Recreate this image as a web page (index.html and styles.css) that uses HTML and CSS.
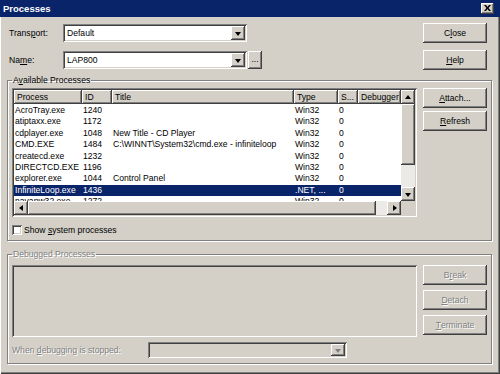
FILE: index.html
```html
<!doctype html>
<html lang="en">
<head>
	<meta charset="UTF-8">
	<title>Processes</title>
	<link rel="stylesheet" href="styles.css">
</head>
<body>
<div class="window">
	<div class="titlebar">
		<span class="title">Processes</span>
		<span class="xbtn">
			<svg width="7" height="6" viewBox="0 0 7 6"><path d="M0 0h2l1.5 2 1.5-2h2l-2.5 3 2.5 3h-2l-1.5-2-1.5 2h-2l2.5-3z" fill="#000"/></svg>
		</span>
	</div>
	<div class="body">
		<div class="top">
			<div class="fields">
				<div class="field">
					<span class="label">Trans<u>p</u>ort:</span>
					<div class="combo">
						<span class="value">Default</span>
						<span class="drop"><i class="tri down"></i></span>
					</div>
				</div>
				<div class="field">
					<span class="label">Na<u>m</u>e:</span>
					<div class="combo">
						<span class="value">LAP800</span>
						<span class="drop"><i class="tri down"></i></span>
					</div>
					<span class="dots">...</span>
				</div>
			</div>
			<div class="btns">
				<span class="btn">C<u>l</u>ose</span>
				<span class="btn"><u>H</u>elp</span>
			</div>
		</div>

		<fieldset class="group">
			<legend>A<u>v</u>ailable Processes</legend>
			<div class="group-main">
				<div class="listview">
					<div class="table">
						<div class="row head">
							<span>Process</span><span>ID</span><span>Title</span><span>Type</span><span>S...</span><span>Debugger</span>
						</div>
						<div class="rows">
							<div class="row"><span>AcroTray.exe</span><span>1240</span><span></span><span>Win32</span><span>0</span><span></span></div>
							<div class="row"><span>atiptaxx.exe</span><span>1172</span><span></span><span>Win32</span><span>0</span><span></span></div>
							<div class="row"><span>cdplayer.exe</span><span>1048</span><span>New Title - CD Player</span><span>Win32</span><span>0</span><span></span></div>
							<div class="row"><span>CMD.EXE</span><span>1484</span><span>C:\WINNT\System32\cmd.exe - infiniteloop</span><span>Win32</span><span>0</span><span></span></div>
							<div class="row"><span>createcd.exe</span><span>1232</span><span></span><span>Win32</span><span>0</span><span></span></div>
							<div class="row"><span>DIRECTCD.EXE</span><span>1196</span><span></span><span>Win32</span><span>0</span><span></span></div>
							<div class="row"><span>explorer.exe</span><span>1044</span><span>Control Panel</span><span>Win32</span><span>0</span><span></span></div>
							<div class="row sel"><span>InfiniteLoop.exe</span><span>1436</span><span></span><span>.NET, ...</span><span>0</span><span></span></div>
							<div class="row"><span>navapw32.exe</span><span>1272</span><span></span><span>Win32</span><span>0</span><span></span></div>
						</div>
					</div>
					<div class="vscroll">
						<span class="sbtn"><i class="tri up"></i></span>
						<span class="thumb vthumb"></span>
						<span class="track"></span>
						<span class="sbtn"><i class="tri down"></i></span>
					</div>
					<div class="hscroll">
						<span class="sbtn"><i class="tri left"></i></span>
						<span class="thumb hthumb"></span>
						<span class="track"></span>
						<span class="sbtn"><i class="tri right"></i></span>
					</div>
					<div class="corner"></div>
				</div>
				<div class="btns side">
					<span class="btn"><u>A</u>ttach...</span>
					<span class="btn"><u>R</u>efresh</span>
				</div>
			</div>
			<div class="check"><span class="box"></span><span>Show <u>s</u>ystem processes</span></div>
		</fieldset>

		<fieldset class="group off">
			<legend>Debugged Processes</legend>
			<div class="group-main">
				<div class="debuglist"></div>
				<div class="btns side spaced">
					<span class="btn">B<u>r</u>eak</span>
					<span class="btn"><u>D</u>etach</span>
					<span class="btn"><u>T</u>erminate</span>
				</div>
			</div>
			<div class="stop-row">
				<span class="stop-label">When <u>d</u>ebugging is stopped:</span>
				<div class="combo small">
					<span class="value"></span>
					<span class="drop"><i class="tri down grey"></i></span>
				</div>
			</div>
		</fieldset>
	</div>
</div>
</body>
</html>
```

FILE: styles.css
```css
*
{
	box-sizing: border-box;
}

body
{
	margin: 0;
	font-family: "Liberation Sans", Arial, sans-serif;
	font-size: 8.6px;
	color: #000000;
}

u
{
	text-decoration: underline;
	text-underline-offset: 1px;
}

.window
{
	width: 500px;
	height: 374px;
	background-color: #d4d0c8;
	box-shadow: inset 1px 0 #ffffff, inset -1px -1px #404040, inset -2px -2px #808080;
	overflow: hidden;
}

.titlebar
{
	height: 17px;
	background-color: #0a246a;
	display: flex;
	align-items: center;
	justify-content: space-between;
	padding: 0 6px 0 3px;
}

.title
{
	color: #ffffff;
	font-weight: bold;
	font-size: 9.5px;
}

.xbtn
{
	width: 13px;
	height: 11px;
	background-color: #d4d0c8;
	box-shadow: inset -1px -1px #404040, inset 1px 1px #ffffff, inset -2px -2px #808080;
	display: flex;
	align-items: center;
	justify-content: center;
	padding-bottom: 1px;
}

.body
{
	padding: 6px 8px 0 7px;
}

.top
{
	display: flex;
	justify-content: space-between;
	padding: 0 5px 0 2px;
}

.fields
{
	display: flex;
	flex-direction: column;
	gap: 9px;
	padding-top: 1px;
}

.field
{
	display: flex;
	align-items: center;
	height: 18px;
}

.label
{
	width: 54px;
}

.combo
{
	width: 184px;
	height: 18px;
	background-color: #ffffff;
	box-shadow: inset 1px 1px #808080, inset -1px -1px #ffffff, inset 2px 2px #404040, inset -2px -2px #d4d0c8;
	display: flex;
	align-items: center;
	justify-content: space-between;
	padding: 2px;
}

.combo .value
{
	padding-left: 2px;
}

.drop
{
	width: 14px;
	height: 14px;
	background-color: #d4d0c8;
	box-shadow: inset -1px -1px #404040, inset 1px 1px #ffffff, inset -2px -2px #808080;
	display: flex;
	align-items: center;
	justify-content: center;
}

.tri
{
	width: 0;
	height: 0;
	border: 3.5px solid transparent;
}

.tri.down
{
	border-top: 4px solid #000000;
	border-bottom-width: 0;
	margin-top: 1px;
}

.tri.up
{
	border-bottom: 4px solid #000000;
	border-top-width: 0;
	margin-bottom: 1px;
}

.tri.left
{
	border-right: 4px solid #000000;
	border-left-width: 0;
	margin-right: 1px;
}

.tri.right
{
	border-left: 4px solid #000000;
	border-right-width: 0;
	margin-left: 1px;
}

.tri.grey
{
	border-top-color: #808080;
}

.dots
{
	width: 14px;
	height: 18px;
	margin-left: 1px;
	background-color: #d4d0c8;
	box-shadow: inset -1px -1px #404040, inset 1px 1px #ffffff, inset -2px -2px #808080;
	display: flex;
	align-items: center;
	justify-content: center;
	padding-bottom: 2px;
}

.btns
{
	display: flex;
	flex-direction: column;
	gap: 7px;
}

.btns.side
{
	gap: 3px;
}

.btns.spaced
{
	gap: 5px;
}

.btn
{
	width: 64px;
	height: 20px;
	background-color: #d4d0c8;
	box-shadow: inset -1px -1px #404040, inset 1px 1px #ffffff, inset -2px -2px #808080;
	display: flex;
	align-items: center;
	justify-content: center;
}

.group
{
	margin: 5px 0 0 0;
	padding: 2px 4px 4px 4px;
	border: 1px solid #808080;
	box-shadow: 1px 1px #ffffff, inset 1px 1px #ffffff;
	min-width: 0;
}

.group legend
{
	padding: 0 1px;
	margin-left: 0;
	line-height: 11px;
}

.group-main
{
	display: flex;
	justify-content: space-between;
	align-items: flex-start;
}

.listview
{
	width: 405px;
	height: 129px;
	padding: 2px;
	background-color: #ffffff;
	box-shadow: inset 1px 1px #808080, inset -1px -1px #ffffff, inset 2px 2px #404040, inset -2px -2px #d4d0c8;
	display: grid;
	grid-template-columns: 387px 14px;
	grid-template-rows: 111px 14px;
}

.table
{
	overflow: hidden;
}

.row
{
	display: grid;
	grid-template-columns: 68px 30px 182px 44px 20px 43px;
	height: 11.4px;
	line-height: 11.4px;
	white-space: nowrap;
}

.row span
{
	padding-left: 1px;
	overflow: hidden;
}

.row.head
{
	height: 14px;
	line-height: 14px;
}

.row.head span
{
	background-color: #d4d0c8;
	box-shadow: inset -1px -1px #404040, inset 1px 1px #ffffff, inset -2px -2px #808080;
	padding-left: 3px;
}

.rows
{
	padding-top: 1px;
}

.row.sel
{
	background-color: #0a246a;
	color: #ffffff;
}

.vscroll
{
	display: flex;
	flex-direction: column;
}

.hscroll
{
	display: flex;
}

.sbtn
{
	width: 14px;
	height: 14px;
	flex: none;
	background-color: #d4d0c8;
	box-shadow: inset -1px -1px #404040, inset 1px 1px #ffffff, inset -2px -2px #808080;
	display: flex;
	align-items: center;
	justify-content: center;
}

.thumb
{
	background-color: #d4d0c8;
	box-shadow: inset -1px -1px #404040, inset 1px 1px #ffffff, inset -2px -2px #808080;
	flex: none;
}

.vthumb
{
	height: 61px;
}

.hthumb
{
	width: 348px;
}

.track
{
	flex: 1;
	background-color: #eceae6;
}

.corner
{
	background-color: #d4d0c8;
}

.check
{
	display: flex;
	align-items: center;
	height: 12px;
	margin-top: 7px;
}

.box
{
	width: 10px;
	height: 10px;
	margin-right: 2px;
	background-color: #ffffff;
	box-shadow: inset 1px 1px #808080, inset -1px -1px #ffffff, inset 2px 2px #404040, inset -2px -2px #d4d0c8;
}

.group.off
{
	margin-top: 8px;
	padding-top: 5px;
	padding-bottom: 5px;
}

.off legend,
.off .btn,
.off .stop-label
{
	color: #808080;
	text-shadow: 1px 1px #ffffff;
}

.debuglist
{
	width: 405px;
	height: 72px;
	box-shadow: inset 1px 1px #808080, inset -1px -1px #ffffff, inset 2px 2px #404040, inset -2px -2px #d4d0c8;
}

.stop-row
{
	display: flex;
	align-items: center;
	margin-top: 5px;
}

.stop-label
{
	width: 136px;
}

.combo.small
{
	width: 199px;
	height: 16px;
	background-color: #d4d0c8;
	padding: 2px;
}

.combo.small .drop
{
	height: 12px;
}
```
